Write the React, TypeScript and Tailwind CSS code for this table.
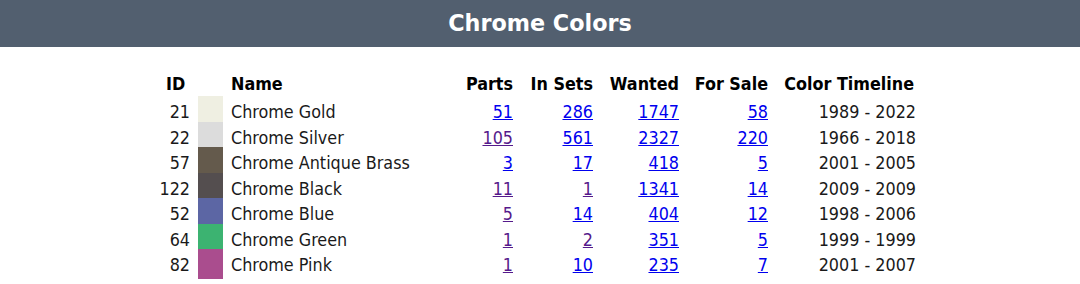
import React from 'react';

type ChromeColor = {
  id: number;
  name: string;
  swatch: string;
  parts: number;
  inSets: number;
  wanted: number;
  forSale: number;
  timeline: string;
  partsVisited?: boolean;
  setsVisited?: boolean;
};

const colors: ChromeColor[] = [
  { id: 21, name: 'Chrome Gold', swatch: 'bg-[#efefe2]', parts: 51, inSets: 286, wanted: 1747, forSale: 58, timeline: '1989 - 2022' },
  { id: 22, name: 'Chrome Silver', swatch: 'bg-[#dcdcdc]', parts: 105, inSets: 561, wanted: 2327, forSale: 220, timeline: '1966 - 2018', partsVisited: true },
  { id: 57, name: 'Chrome Antique Brass', swatch: 'bg-[#645a4c]', parts: 3, inSets: 17, wanted: 418, forSale: 5, timeline: '2001 - 2005' },
  { id: 122, name: 'Chrome Black', swatch: 'bg-[#544e4f]', parts: 11, inSets: 1, wanted: 1341, forSale: 14, timeline: '2009 - 2009', partsVisited: true, setsVisited: true },
  { id: 52, name: 'Chrome Blue', swatch: 'bg-[#5c66a4]', parts: 5, inSets: 14, wanted: 404, forSale: 12, timeline: '1998 - 2006', partsVisited: true },
  { id: 64, name: 'Chrome Green', swatch: 'bg-[#3cb371]', parts: 1, inSets: 2, wanted: 351, forSale: 5, timeline: '1999 - 1999', partsVisited: true, setsVisited: true },
  { id: 82, name: 'Chrome Pink', swatch: 'bg-[#aa4d8e]', parts: 1, inSets: 10, wanted: 235, forSale: 7, timeline: '2001 - 2007', partsVisited: true },
];

const cols = 'grid grid-cols-[34px_32px_214px_77px_80px_86px_89px_148px]';

function NumLink({ value, visited }: { value: number; visited?: boolean }) {
  return (
    <a
      href="#"
      className={`underline ${visited ? 'text-[#551a8b]' : 'text-[#0000ee]'}`}
    >
      {value}
    </a>
  );
}

export default function App() {
  return (
    <div className="min-h-[284px] bg-white font-[family-name:'DejaVu_Sans_Condensed','DejaVu_Sans',sans-serif] font-stretch-condensed text-[17.8px] text-[#1a1a1a]">
      <div className="flex h-[47px] items-center justify-center bg-[#525f6f]">
        <h1 className="font-[family-name:'DejaVu_Sans',sans-serif] font-stretch-normal text-[22.3px] font-bold text-white">
          Chrome Colors
        </h1>
      </div>

      <div className="mx-auto mt-6 w-[760px]">
        {/* header row */}
        <div className={`${cols} h-[25px] items-center font-bold text-black`}>
          <div className="pl-[6px]">ID</div>
          <div />
          <div className="pl-[5px]">Name</div>
          <div className="pr-[4px] text-right">Parts</div>
          <div className="pr-[4px] text-right">In Sets</div>
          <div className="pr-[4px] text-right">Wanted</div>
          <div className="pr-[4px] text-right">For Sale</div>
          <div className="pr-[6px] text-right">Color Timeline</div>
        </div>

        {colors.map((c) => (
          <div key={c.id} className={`${cols} h-[25.5px]`}>
            <div className="flex items-center justify-end pt-[3px] pr-[4px]">{c.id}</div>
            <div className="flex pl-[4px] pr-[3px]">
              <div className={`flex-1 ${c.swatch}`} />
            </div>
            <div className="flex items-center pt-[3px] pl-[5px]">{c.name}</div>
            <div className="flex items-center justify-end pt-[3px] pr-[4px]">
              <NumLink value={c.parts} visited={c.partsVisited} />
            </div>
            <div className="flex items-center justify-end pt-[3px] pr-[4px]">
              <NumLink value={c.inSets} visited={c.setsVisited} />
            </div>
            <div className="flex items-center justify-end pt-[3px] pr-[4px]">
              <NumLink value={c.wanted} />
            </div>
            <div className="flex items-center justify-end pt-[3px] pr-[4px]">
              <NumLink value={c.forSale} />
            </div>
            <div className="flex items-center justify-end pt-[3px] pr-[4px]">{c.timeline}</div>
          </div>
        ))}
      </div>
    </div>
  );
}
